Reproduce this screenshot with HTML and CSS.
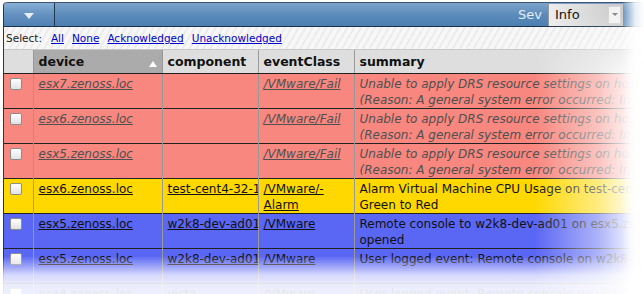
FILE: index.html
```html
<!DOCTYPE html>
<html lang="en">
<head>
  <meta charset="UTF-8" />
  <title>Event Console</title>
  <link rel="stylesheet" href="styles.css">
</head>
<body>

  <div class="panel">
    <div class="toolbar">
      <div class="menu-btn"><span class="tri"></span></div>
      <div class="spacer"></div>
      <span class="sev-label">Sev</span>
      <div class="sev-select">
        <span>Info</span>
        <span class="sev-arrow"></span>
      </div>
    </div>

    <div class="select-bar">
      <span>Select:</span>
      <a href="#">All</a>
      <a href="#">None</a>
      <a href="#">Acknowledged</a>
      <a href="#">Unacknowledged</a>
    </div>

    <table class="events">
      <colgroup>
        <col class="c-check">
        <col class="c-device">
        <col class="c-comp">
        <col class="c-class">
        <col class="c-summary">
      </colgroup>
      <thead>
        <tr>
          <th></th>
          <th class="sorted">device <span class="sort-arrow"></span></th>
          <th>component</th>
          <th>eventClass</th>
          <th>summary</th>
        </tr>
      </thead>
      <tbody>
        <tr class="sev-error acked">
          <td><span class="cb"></span></td>
          <td><a href="#">esx7.zenoss.loc</a></td>
          <td></td>
          <td><a href="#">/VMware/Fail</a></td>
          <td class="summary">Unable to apply DRS resource settings on host esx7.zenoss.loc<br>(Reason: A general system error occurred: Invalid fault)</td>
        </tr>
        <tr class="sev-error acked">
          <td><span class="cb"></span></td>
          <td><a href="#">esx6.zenoss.loc</a></td>
          <td></td>
          <td><a href="#">/VMware/Fail</a></td>
          <td class="summary">Unable to apply DRS resource settings on host esx6.zenoss.loc<br>(Reason: A general system error occurred: Invalid fault)</td>
        </tr>
        <tr class="sev-error acked">
          <td><span class="cb"></span></td>
          <td><a href="#">esx5.zenoss.loc</a></td>
          <td></td>
          <td><a href="#">/VMware/Fail</a></td>
          <td class="summary">Unable to apply DRS resource settings on host esx5.zenoss.loc<br>(Reason: A general system error occurred: Invalid fault)</td>
        </tr>
        <tr class="sev-warning">
          <td><span class="cb"></span></td>
          <td><a href="#">esx6.zenoss.loc</a></td>
          <td class="clip"><a href="#">test-cent4-32-1</a></td>
          <td><a href="#">/VMware/-Alarm</a></td>
          <td class="summary">Alarm Virtual Machine CPU Usage on test-cent4-32-1 changed from<br>Green to Red</td>
        </tr>
        <tr class="sev-info">
          <td><span class="cb"></span></td>
          <td><a href="#">esx5.zenoss.loc</a></td>
          <td class="clip"><a href="#">w2k8-dev-ad01</a></td>
          <td><a href="#">/VMware</a></td>
          <td class="summary">Remote console to w2k8-dev-ad01 on esx5.zenoss.loc in ha-datacenter is<br>opened</td>
        </tr>
        <tr class="sev-info">
          <td><span class="cb"></span></td>
          <td><a href="#">esx5.zenoss.loc</a></td>
          <td class="clip"><a href="#">w2k8-dev-ad01</a></td>
          <td><a href="#">/VMware</a></td>
          <td class="summary">User logged event: Remote console on w2k8-dev-ad01 disconnected</td>
        </tr>
        <tr class="sev-info">
          <td><span class="cb"></span></td>
          <td><a href="#">esx4.zenoss.loc</a></td>
          <td class="clip"><a href="#">vista</a></td>
          <td><a href="#">/VMware</a></td>
          <td class="summary">User logged event: Remote console on vista connected</td>
        </tr>
      </tbody>
    </table>
  </div>

  <div class="fade-right"></div>
  <div class="fade-edge"></div>
  <div class="fade-bottom"></div>

</body>
</html>
```

FILE: styles.css
```css
body {
  margin: 0;
  padding: 0;
  background: #fff;
  font-family: 'DejaVu Sans', Verdana, sans-serif;
  color: #111;
  overflow: hidden;
  height: 294px;
}

.panel {
  margin: 2px 0 0 3px;
  width: 780px;
  border-left: 1px solid #333;
  border-top-left-radius: 4px;
}

/* top toolbar */
.toolbar {
  display: flex;
  align-items: center;
  height: 23px;
  border-top: 1px solid #3d5470;
  border-bottom: 1px solid #1d3149;
  border-top-left-radius: 4px;
  background: linear-gradient(#7ba3cb, #5d8cbb 50%, #4b7eb2);
}

.menu-btn {
  width: 50px;
  height: 100%;
  display: flex;
  align-items: center;
  justify-content: center;
  border-right: 1px solid #22364e;
  border-top-left-radius: 4px;
  background: linear-gradient(#88afd6, #6591c0 50%, #4f80b3);
}

.tri {
  width: 0;
  height: 0;
  border-left: 5px solid transparent;
  border-right: 5px solid transparent;
  border-top: 6px solid #e8eef5;
  margin-top: 2px;
}

.spacer {
  flex: 1;
}

.sev-label {
  color: #e4ecf4;
  font-size: 13px;
  margin-right: 6px;
}

.sev-select {
  display: flex;
  align-items: center;
  justify-content: space-between;
  width: 75px;
  height: 22px;
  margin-right: 161px;
  box-sizing: border-box;
  padding: 0 2px 0 6px;
  background: linear-gradient(to right, #ededed, #c9c9c9);
  border-left: 1px solid #999;
  font-size: 13px;
  color: #111;
}

.sev-arrow {
  width: 11px;
  height: 16px;
  background: #f2f2f2;
  border: 1px solid #d4d4d4;
  position: relative;
}

.sev-arrow::after {
  content: '';
  position: absolute;
  left: 3px;
  top: 6px;
  border-left: 3px solid transparent;
  border-right: 3px solid transparent;
  border-top: 3px solid #888;
}

/* select links */
.select-bar {
  display: flex;
  align-items: center;
  gap: 8px;
  height: 22px;
  padding-left: 2px;
  font-size: 10.5px;
  color: #222;
  background: repeating-linear-gradient(-60deg, #f7f7f7 0, #f7f7f7 4px, #ececec 4px, #ececec 6px);
}

.select-bar span {
  margin-right: 1px;
}

.select-bar a {
  color: #0000c8;
}

/* event table */
.events {
  border-collapse: collapse;
  table-layout: fixed;
  width: 777px;
  font-size: 12px;
}

.c-check { width: 29px; }
.c-device { width: 129px; }
.c-comp { width: 96px; }
.c-class { width: 96px; }
.c-summary { width: 427px; }

.events th {
  height: 23px;
  padding: 0 5px;
  text-align: left;
  font-size: 12.5px;
  background: #dedede;
  border-top: 1px solid #c8c8c8;
  border-left: 1px solid #999;
  border-bottom: 1px solid #222;
  position: relative;
}

.events th:first-child {
  border-left: none;
}

.events th.sorted {
  background: #ababab;
}

.sort-arrow {
  position: absolute;
  right: 5px;
  top: 11px;
  border-left: 4px solid transparent;
  border-right: 4px solid transparent;
  border-bottom: 6px solid #fff;
}

.events td {
  height: 30px;
  padding: 2px 5px 0;
  vertical-align: top;
  line-height: 16px;
  border-top: 1px solid #222;
  border-left: 1px solid #999;
  overflow: hidden;
}

.events td:first-child {
  border-left: none;
  padding: 4px 0 0 6px;
}

.events td.clip,
.events td.summary {
  white-space: nowrap;
}

.events td.clip {
  text-overflow: clip;
}

.events td a {
  color: inherit;
}

.cb {
  display: block;
  width: 10px;
  height: 10px;
  border: 1px solid #8c8c8c;
  border-radius: 2px;
  background: linear-gradient(#fff, #e2e2e2);
}

.sev-error { background: #f7877f; }
.sev-warning { background: #ffd800; }
.sev-info { background: #5a66f4; }

.acked td {
  color: #505050;
  font-style: italic;
}

/* fade-out of the screenshot edges */
.fade-right {
  position: fixed;
  top: 0;
  right: 0;
  width: 110px;
  height: 100%;
  background: linear-gradient(to right, rgba(255,255,255,0) 0, rgba(255,255,255,0.5) 58%, rgba(255,255,255,0.92) 88%, #fff 100%);
  -webkit-mask-image: linear-gradient(transparent 12px, #000 75px);
  mask-image: linear-gradient(transparent 12px, #000 75px);
}

.fade-edge {
  position: fixed;
  top: 0;
  right: 0;
  width: 22px;
  height: 100%;
  background: linear-gradient(to right, rgba(255,255,255,0) 0, rgba(255,255,255,0.85) 60%, #fff 100%);
}

.fade-bottom {
  position: fixed;
  left: 0;
  bottom: 0;
  width: 100%;
  height: 38px;
  background: linear-gradient(rgba(255,255,255,0) 0, rgba(255,255,255,0.75) 50%, rgba(255,255,255,0.88) 75%, rgba(255,255,255,0.9) 100%);
}
```
